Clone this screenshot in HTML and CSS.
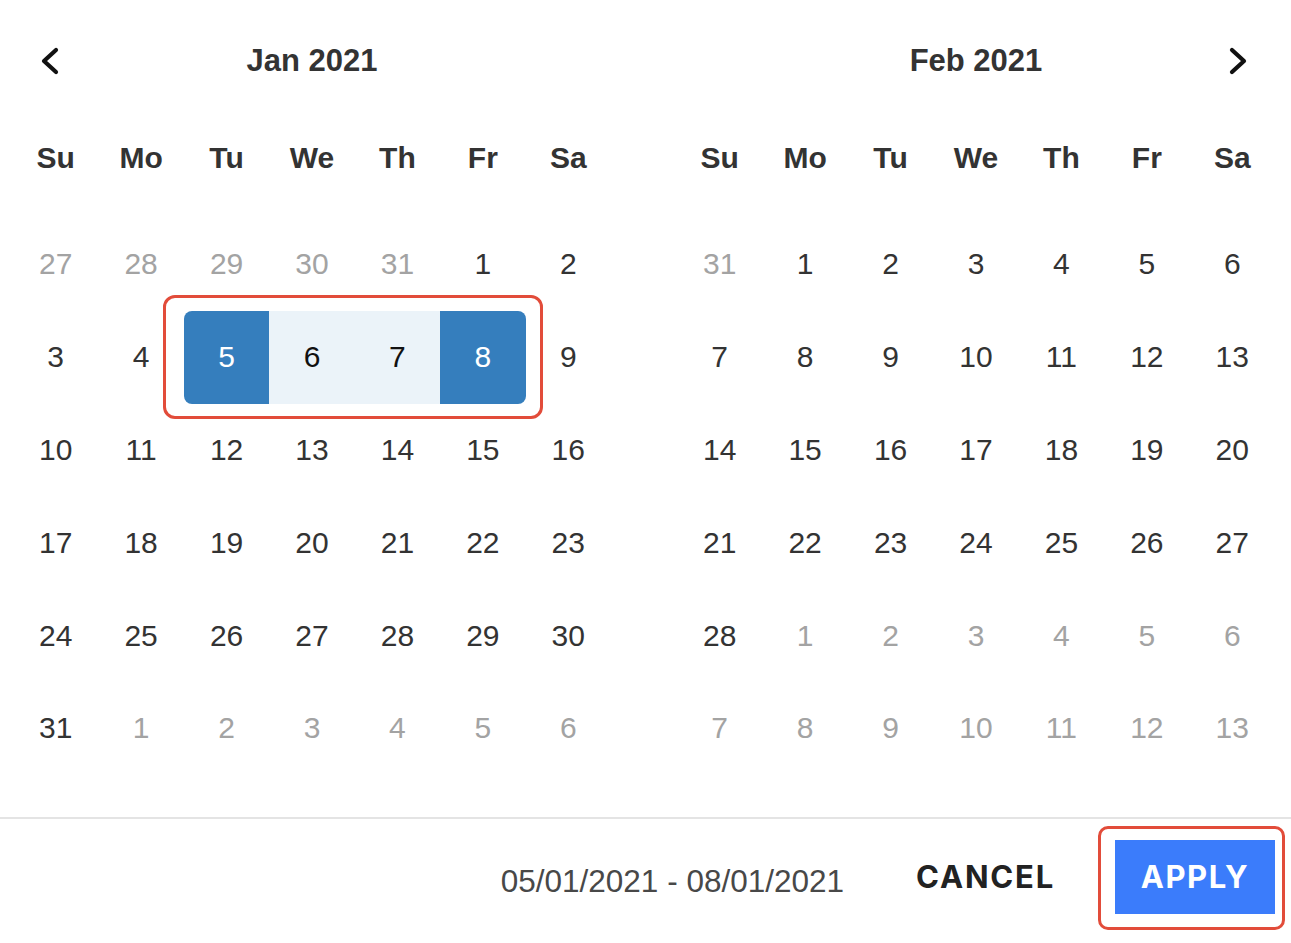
FILE: index.html
```html
<!DOCTYPE html>
<html lang="en">
<head>
    <meta charset="UTF-8">
    <meta name="viewport" content="width=device-width, initial-scale=1.0">
    <title>Date range picker</title>
    <link rel="stylesheet" href="styles.css">
</head>
<body>
    <div class="picker">
        <div class="calendars">
            <!-- Janeiro -->
            <div class="month">
                <div class="month-head">
                    <button class="nav nav-prev" aria-label="Previous month">
                        <svg width="22" height="30" viewBox="0 0 22 30"><polyline points="17,4 5,15 17,26" fill="none" stroke="#111" stroke-width="4.2" stroke-linecap="round" stroke-linejoin="round"/></svg>
                    </button>
                    <div class="month-title">Jan 2021</div>
                    <span></span>
                </div>
                <div class="weekdays">
                    <div>Su</div><div>Mo</div><div>Tu</div><div>We</div><div>Th</div><div>Fr</div><div>Sa</div>
                </div>
                <div class="days">
                    <div class="day off">27</div><div class="day off">28</div><div class="day off">29</div><div class="day off">30</div><div class="day off">31</div><div class="day">1</div><div class="day">2</div>
                    <div class="day">3</div><div class="day">4</div><div class="day start">5</div><div class="day in-range">6</div><div class="day in-range">7</div><div class="day end">8</div><div class="day">9</div>
                    <div class="day">10</div><div class="day">11</div><div class="day">12</div><div class="day">13</div><div class="day">14</div><div class="day">15</div><div class="day">16</div>
                    <div class="day">17</div><div class="day">18</div><div class="day">19</div><div class="day">20</div><div class="day">21</div><div class="day">22</div><div class="day">23</div>
                    <div class="day">24</div><div class="day">25</div><div class="day">26</div><div class="day">27</div><div class="day">28</div><div class="day">29</div><div class="day">30</div>
                    <div class="day">31</div><div class="day off">1</div><div class="day off">2</div><div class="day off">3</div><div class="day off">4</div><div class="day off">5</div><div class="day off">6</div>
                    <div class="mark"></div>
                </div>
            </div>

            <!-- Fevereiro -->
            <div class="month">
                <div class="month-head">
                    <span></span>
                    <div class="month-title">Feb 2021</div>
                    <button class="nav nav-next" aria-label="Next month">
                        <svg width="22" height="30" viewBox="0 0 22 30"><polyline points="5,4 17,15 5,26" fill="none" stroke="#111" stroke-width="4.2" stroke-linecap="round" stroke-linejoin="round"/></svg>
                    </button>
                </div>
                <div class="weekdays">
                    <div>Su</div><div>Mo</div><div>Tu</div><div>We</div><div>Th</div><div>Fr</div><div>Sa</div>
                </div>
                <div class="days">
                    <div class="day off">31</div><div class="day">1</div><div class="day">2</div><div class="day">3</div><div class="day">4</div><div class="day">5</div><div class="day">6</div>
                    <div class="day">7</div><div class="day">8</div><div class="day">9</div><div class="day">10</div><div class="day">11</div><div class="day">12</div><div class="day">13</div>
                    <div class="day">14</div><div class="day">15</div><div class="day">16</div><div class="day">17</div><div class="day">18</div><div class="day">19</div><div class="day">20</div>
                    <div class="day">21</div><div class="day">22</div><div class="day">23</div><div class="day">24</div><div class="day">25</div><div class="day">26</div><div class="day">27</div>
                    <div class="day">28</div><div class="day off">1</div><div class="day off">2</div><div class="day off">3</div><div class="day off">4</div><div class="day off">5</div><div class="day off">6</div>
                    <div class="day off">7</div><div class="day off">8</div><div class="day off">9</div><div class="day off">10</div><div class="day off">11</div><div class="day off">12</div><div class="day off">13</div>
                </div>
            </div>
        </div>

        <div class="footer">
            <span class="range">05/01/2021 - 08/01/2021</span>
            <button class="cancel">CANCEL</button>
            <div class="apply-wrap">
                <button class="apply">APPLY</button>
            </div>
        </div>
    </div>
</body>
</html>
```

FILE: styles.css
```css
/* Estilos gerais */
body {
    margin: 0;
    background: #fff;
    color: #333;
    font-family: "Liberation Sans", Arial, sans-serif;
}

button {
    font-family: inherit;
    cursor: pointer;
}

.picker {
    width: 1291px;
    height: 943px;
    display: flex;
    flex-direction: column;
    overflow: hidden;
}

.calendars {
    display: flex;
    gap: 66px;
    padding: 30px 16px 0 13px;
}

.month {
    width: 598px;
}

.month-head {
    display: grid;
    grid-template-columns: 86px 1fr 86px;
    align-items: center;
    height: 62px;
}

.month-title {
    text-align: center;
    font-size: 31px;
    font-weight: bold;
    color: #333;
}

.nav {
    display: flex;
    padding: 0;
    background: none;
    border: none;
}

.nav-prev {
    justify-self: start;
    margin-left: 26px;
}

.nav-next {
    justify-self: end;
    margin-right: 26px;
}

.weekdays {
    display: grid;
    grid-template-columns: repeat(7, 1fr);
    margin-top: 41px;
    height: 50px;
    line-height: 50px;
    text-align: center;
    font-size: 30px;
    font-weight: bold;
    color: #333;
}

.days {
    position: relative;
    display: grid;
    grid-template-columns: repeat(7, 1fr);
    grid-auto-rows: 92.8px;
    margin-top: 35px;
    font-size: 30px;
}

.day {
    display: flex;
    align-items: center;
    justify-content: center;
    color: #333;
}

.day.off {
    color: #a3a3a3;
}

.day.in-range {
    background: #ebf3f9;
    color: #111;
}

.day.start,
.day.end {
    background: #357ebd;
    color: #fff;
}

.day.start {
    border-radius: 8px 0 0 8px;
}

.day.end {
    border-radius: 0 8px 8px 0;
}

/* destaque vermelho da seleção */
.mark {
    position: absolute;
    left: 150px;
    top: 77px;
    width: 380px;
    height: 124px;
    box-sizing: border-box;
    border: 3px solid #e24c3a;
    border-radius: 12px;
}

.footer {
    margin-top: 42px;
    border-top: 2px solid #e4e4e4;
    display: flex;
    justify-content: flex-end;
    align-items: center;
    padding: 21px 16px 0 0;
}

.range {
    margin-top: 10px;
    margin-right: 72px;
    font-size: 31.5px;
    color: #484848;
}

.cancel {
    margin-right: 60px;
    padding: 0;
    background: none;
    border: none;
    font-family: Inter, "Liberation Sans", sans-serif;
    font-size: 31px;
    font-weight: bold;
    letter-spacing: 1.8px;
    color: #222;
}

.apply-wrap {
    position: relative;
}

.apply-wrap::after {
    content: "";
    position: absolute;
    left: -17px;
    right: -10px;
    top: -14px;
    bottom: -16px;
    border: 3px solid #e24c3a;
    border-radius: 10px;
}

.apply {
    display: block;
    width: 160px;
    height: 74px;
    padding: 0;
    background: #3b7cfb;
    border: none;
    color: #fff;
    font-family: Inter, "Liberation Sans", sans-serif;
    font-size: 31px;
    font-weight: bold;
    letter-spacing: 1.5px;
}
```
